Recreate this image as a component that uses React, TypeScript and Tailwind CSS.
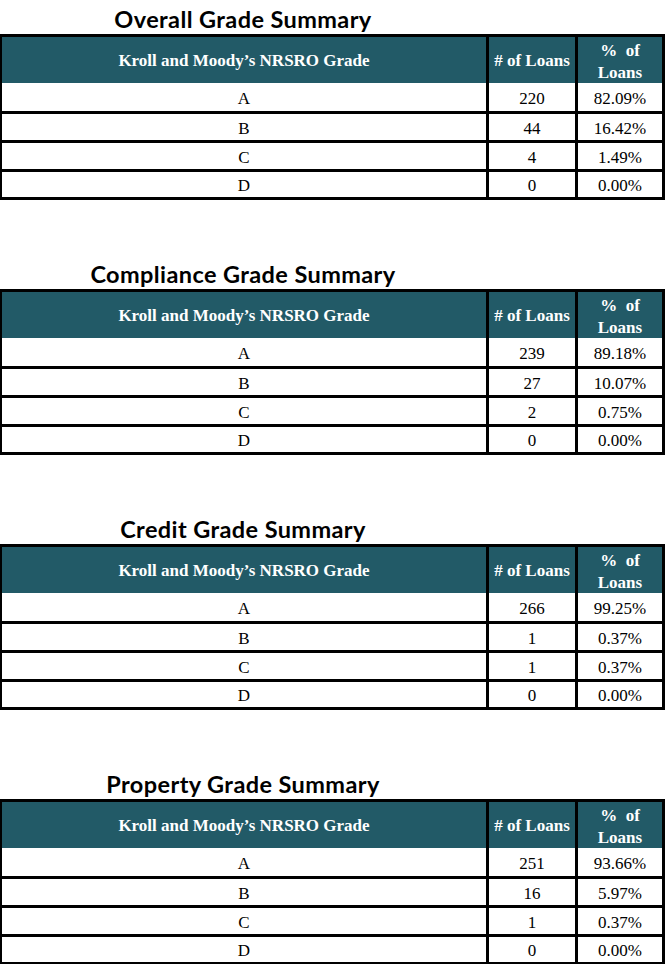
const tables = [
  {
    title: 'Overall Grade Summary',
    rows: [
      ['A', '220', '82.09%'],
      ['B', '44', '16.42%'],
      ['C', '4', '1.49%'],
      ['D', '0', '0.00%'],
    ],
  },
  {
    title: 'Compliance Grade Summary',
    rows: [
      ['A', '239', '89.18%'],
      ['B', '27', '10.07%'],
      ['C', '2', '0.75%'],
      ['D', '0', '0.00%'],
    ],
  },
  {
    title: 'Credit Grade Summary',
    rows: [
      ['A', '266', '99.25%'],
      ['B', '1', '0.37%'],
      ['C', '1', '0.37%'],
      ['D', '0', '0.00%'],
    ],
  },
  {
    title: 'Property Grade Summary',
    rows: [
      ['A', '251', '93.66%'],
      ['B', '16', '5.97%'],
      ['C', '1', '0.37%'],
      ['D', '0', '0.00%'],
    ],
  },
];

const rowHeights = ['h-[28px] mt-px', 'h-[26px] mt-[3px]', 'h-[26px] mt-[3px]', 'h-[25px] mt-[3px]'];

function GradeTable({ title, rows }: { title: string; rows: string[][] }) {
  return (
    <section className="mb-[55px] last:mb-0">
      {/* Title, centred over the grade column */}
      <div className="h-[34px] w-[486px] flex items-end justify-center pb-[3px]">
        <h2 className="text-[23.5px] leading-none font-bold tracking-[0.4px] text-black font-['Lato',sans-serif]">
          {title}
        </h2>
      </div>

      {/* Black background shows through the gaps as cell borders */}
      <div className="bg-black pl-[2px] pr-[3px] pt-[3px] pb-[3px] font-['Liberation_Serif','Times_New_Roman',serif] text-[17px]">
        <div className="grid grid-cols-[484px_86px_84px] gap-x-[3px] h-[45px] text-white font-bold">
          <div className="bg-[#225a67] flex items-center justify-center">
            Kroll and Moody’s NRSRO Grade
          </div>
          <div className="bg-[#225a67] flex items-center justify-center">
            # of Loans
          </div>
          <div className="bg-[#225a67] flex flex-col items-center justify-center leading-[22px] pt-[3px]">
            <span>%&nbsp;&nbsp;of</span>
            <span>Loans</span>
          </div>
        </div>

        {rows.map((row, i) => (
          <div key={i} className={`grid grid-cols-[484px_86px_84px] gap-x-[3px] ${rowHeights[i]} text-black`}>
            {row.map((cell, j) => (
              <div
                key={j}
                className="bg-white flex items-center justify-center leading-none pt-[2px] font-['Liberation_Serif',serif]"
              >
                {cell}
              </div>
            ))}
          </div>
        ))}
      </div>
    </section>
  );
}

export default function App() {
  return (
    <div className="w-[665px] h-[964px] bg-white overflow-hidden">
      {tables.map((t) => (
        <GradeTable key={t.title} title={t.title} rows={t.rows} />
      ))}
    </div>
  );
}
